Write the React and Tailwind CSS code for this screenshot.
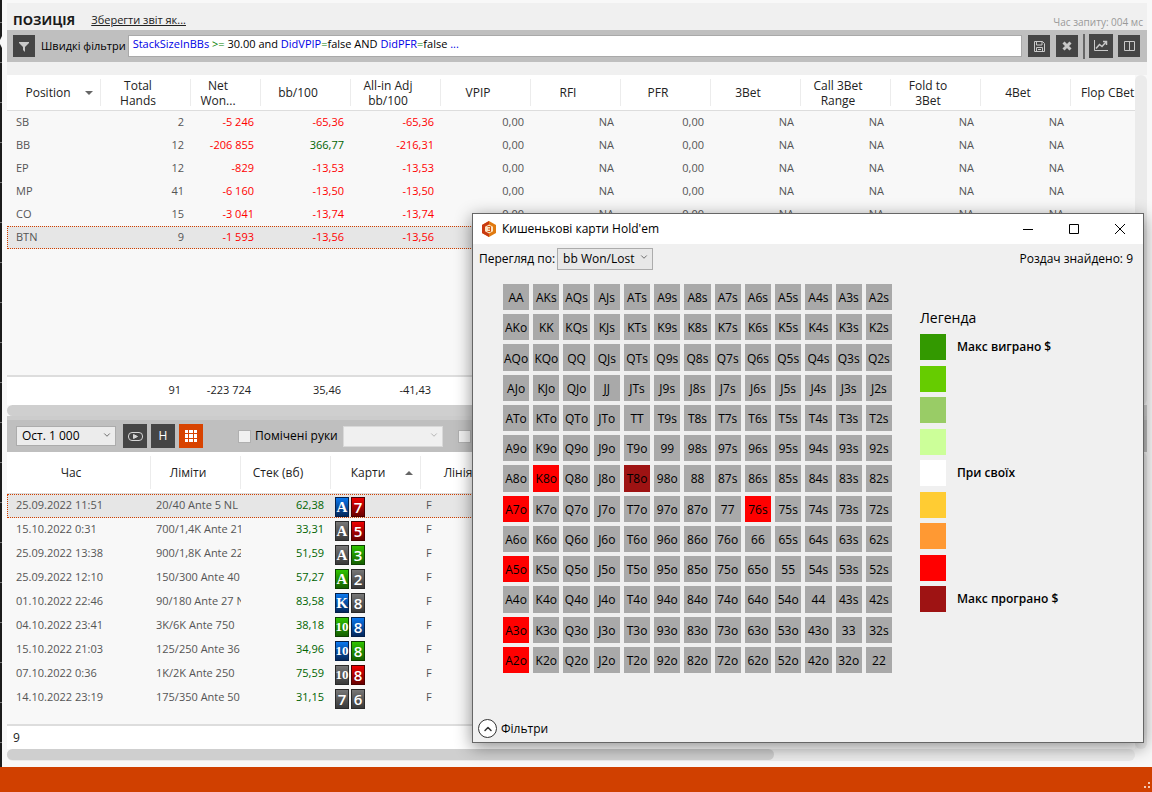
// src/App.jsx
import { useState } from "react";
import { ChevronDown, ChevronUp } from "lucide-react";

const columns = [
  { label: "Position", width: "w-[94px]", sort: "down" },
  { label: "Total Hands", width: "w-[90px]" },
  { label: "Net Won...", width: "w-[70px]" },
  { label: "bb/100", width: "w-[90px]" },
  { label: "All-in Adj bb/100", width: "w-[90px]" },
  { label: "VPIP", width: "w-[90px]" },
  { label: "RFI", width: "w-[90px]" },
  { label: "PFR", width: "w-[90px]" },
  { label: "3Bet", width: "w-[90px]" },
  { label: "Call 3Bet Range", width: "w-[90px]" },
  { label: "Fold to 3Bet", width: "w-[90px]" },
  { label: "4Bet", width: "w-[90px]" },
  { label: "Flop CBet", width: "" },
];

const tail = ["0,00", "NA", "0,00", "NA", "NA", "NA", "NA", ""];

const positions = [
  ["SB", "2", "-5 246", "-65,36", "-65,36", ...tail],
  ["BB", "12", "-206 855", "366,77", "-216,31", ...tail],
  ["EP", "12", "-829", "-13,53", "-13,53", ...tail],
  ["MP", "41", "-6 160", "-13,50", "-13,50", ...tail],
  ["CO", "15", "-3 041", "-13,74", "-13,74", ...tail],
  ["BTN", "9", "-1 593", "-13,56", "-13,56", ...tail],
];

const handColumns = [
  { label: "Час", width: "w-[144px]" },
  { label: "Ліміти", width: "w-[90px]" },
  { label: "Стек (вб)", width: "w-[90px]" },
  { label: "Карти", width: "w-[90px]", sort: "up" },
  { label: "Лінія", width: "w-[90px]" },
  { label: "", width: "" },
];

// suits: b = diamonds, r = hearts, k = spades, g = clubs
const hands = [
  ["25.09.2022 11:51", "20/40 Ante 5 NL", "62,38", "Ab 7r"],
  ["15.10.2022 0:31", "700/1,4K Ante 210", "33,31", "Ak 5r"],
  ["25.09.2022 13:38", "900/1,8K Ante 225", "51,59", "Ak 3g"],
  ["25.09.2022 12:10", "150/300 Ante 40", "57,27", "Ag 2k"],
  ["01.10.2022 22:46", "90/180 Ante 27 NL", "83,58", "Kb 8k"],
  ["04.10.2022 23:41", "3K/6K Ante 750", "38,18", "10g 8b"],
  ["15.10.2022 21:03", "125/250 Ante 36", "34,96", "10b 8g"],
  ["07.10.2022 0:36", "1K/2K Ante 250", "75,59", "10k 8r"],
  ["14.10.2022 23:19", "175/350 Ante 50", "31,15", "7k 6k"],
];

const suitClass = {
  b: "from-[#0a78f0] to-[#04285c] border-[#04204a]",
  r: "from-[#f00000] to-[#6a0000] border-[#4a0000]",
  k: "from-[#777777] to-[#3a3a3a] border-[#2a2a2a]",
  g: "from-[#2fc400] to-[#156000] border-[#0c4000]",
};

const ranks = "AKQJT98765432".split("");

const heat = {
  K8o: "bg-[#ff0000]",
  T8o: "bg-[#9e1313]",
  A7o: "bg-[#ff0000]",
  "76s": "bg-[#ff0000]",
  A5o: "bg-[#ff0000]",
  A3o: "bg-[#ff0000]",
  A2o: "bg-[#ff0000]",
};

const legend = [
  { color: "bg-[#339900]", label: "Макс виграно $" },
  { color: "bg-[#66cc00]" },
  { color: "bg-[#99cc66]" },
  { color: "bg-[#ccff99]" },
  { color: "bg-white", label: "При своїх" },
  { color: "bg-[#ffcc33]" },
  { color: "bg-[#ff9933]" },
  { color: "bg-[#ff0000]" },
  { color: "bg-[#9e1313]", label: "Макс програно $" },
];

function comboName(row, col) {
  if (row === col) return ranks[row] + ranks[row];
  return row < col ? `${ranks[row]}${ranks[col]}s` : `${ranks[col]}${ranks[row]}o`;
}

function valueColor(value, index) {
  if (index < 2) return "text-[#555555]";
  if (value.startsWith("-")) return "text-[#ff0000]";
  if (index === 3) return "text-[#006400]";
  return "text-[#555555]";
}

function IconButton({ label, className = "size-[22px]", children }) {
  return (
    <button
      type="button"
      aria-label={label}
      className={`grid shrink-0 place-items-center bg-[#454545] text-[#d6d6d6] ${className}`}
    >
      {children}
    </button>
  );
}

function HeaderCell({ column, height, last }) {
  return (
    <th className={`relative border-b border-[#dddddd] p-0 font-normal ${column.width}`}>
      <div className={`flex items-center py-1 ${height}`}>
        <span
          className={`flex-1 ${
            last ? "pl-2.5 text-left whitespace-nowrap" : column.sort === "down" ? "pl-1 text-center" : "px-2 text-center"
          }`}
        >
          {column.label}
        </span>
        {last ? null : (
          <span className="flex w-4 self-stretch items-center border-r border-[#ececec]">
            {column.sort ? (
              <svg viewBox="0 0 8 4" className="h-1 w-2 shrink-0" fill="#666666">
                <path d={column.sort === "down" ? "M0 0h8L4 4z" : "M0 4h8L4 0z"} />
              </svg>
            ) : null}
          </span>
        )}
      </div>
    </th>
  );
}

function Card({ code }) {
  const rank = code.slice(0, -1);
  const font =
    rank === "10"
      ? "font-['Liberation_Serif'] text-[13px] font-bold"
      : /\d/.test(rank)
        ? "font-['Open_Sans'] text-[15px] font-semibold"
        : "font-['Liberation_Serif'] text-[15px] font-bold";
  return (
    <span
      className={`flex h-5 w-3.5 items-center justify-center border bg-linear-to-b leading-5 text-white ${font} ${suitClass[code.slice(-1)]}`}
    >
      {rank}
    </span>
  );
}

function PositionReport() {
  const [filter, setFilter] = useState(
    "StackSizeInBBs >= 30.00 and DidVPIP=false AND DidPFR=false ..."
  );
  // keywords blue, operators green
  const tokens = filter.split(/(StackSizeInBBs|DidVPIP|DidPFR|>=|=|\.\.\.)/);

  return (
    <section className="flex flex-1 flex-col">
      <header className="flex h-[27px] items-center bg-[#f0f0f0] pt-1.5 pr-1 pl-1.5">
        <h1 className="text-[13px] leading-4 font-bold text-[#1a1a1a]">ПОЗИЦІЯ</h1>
        <a href="#save" className="ml-4 text-[11px] leading-4 text-[#222222] underline">
          Зберегти звіт як...
        </a>
        <span className="ml-auto pt-1 text-[10px] leading-4 text-[#999999]">Час запиту: 004 мс</span>
      </header>

      <div className="flex h-8 items-center bg-[#bfbfbf] pr-[7px] pl-1.5">
        <IconButton label="Фільтр">
          <svg viewBox="0 0 22 22" className="size-[22px]" fill="#c9c9c9">
            <path d="M6 7h10v1l-4 4v5l-2-2v-3L6 8z" />
          </svg>
        </IconButton>
        <label htmlFor="quick-filter" className="ml-1.5 text-[11px] whitespace-nowrap text-black">
          Швидкі фільтри
        </label>
        <div className="relative ml-0.5 h-[22px] flex-1 border border-[#a9a9a9] bg-white text-[11px]">
          <div
            aria-hidden="true"
            className="pointer-events-none absolute inset-0 overflow-hidden px-1 leading-4 whitespace-pre text-black"
          >
            {tokens.map((token, i) => {
              const color = /^(>=|=)$/.test(token)
                ? "text-[#008000]"
                : i % 2
                  ? "text-[#0000e6]"
                  : "text-black";
              return (
                <span key={i} className={color}>
                  {token}
                </span>
              );
            })}
          </div>
          <input
            id="quick-filter"
            value={filter}
            onChange={(e) => setFilter(e.target.value)}
            className="block h-4 w-full bg-transparent px-1 leading-4 text-transparent caret-black outline-none"
          />
        </div>
        <div className="ml-1.5 flex items-center">
          <IconButton label="Зберегти">
            <svg viewBox="0 0 22 22" className="size-[22px]" fill="none" stroke="#c9c9c9">
              <path d="M6.5 6.5h8l2 2v8h-10zM8.5 6.5v3.500h5.500v-3.500M8.500 16.500v-4h6v4M10 14.500h3" />
            </svg>
          </IconButton>
          <IconButton label="Очистити" className="ml-1.5 size-[22px]">
            <svg viewBox="0 0 22 22" className="size-[22px]" stroke="#c9c9c9" strokeWidth="3">
              <path d="M7.500 7.500l7 7M14.500 7.500l-7 7" />
            </svg>
          </IconButton>
          <span className="mr-1 ml-[5px] h-[25px] w-0.5 bg-[#666666]" />
          <IconButton label="Графік" className="size-6">
            <svg viewBox="0 0 24 24" className="size-6" fill="none" stroke="#c9c9c9">
              <path d="M5.500 6v10.500H19" />
              <path d="M7 14.500l3.500-4 2.500 2 4-4.500" strokeWidth="1.500" />
              <path d="M14 7.500h3.500V11" strokeWidth="1.500" />
            </svg>
          </IconButton>
          <IconButton label="Колонки" className="ml-[5px] size-[22px]">
            <svg viewBox="0 0 22 22" className="size-[22px]" fill="none" stroke="#c9c9c9">
              <path d="M6.500 6.500h10v9h-10zM11.500 6.500v9" />
            </svg>
          </IconButton>
        </div>
      </div>

      <div className="h-[13px] bg-[#f0f0f0]" />

      <div className="flex flex-1">
        <div className="flex min-w-0 flex-1 flex-col overflow-hidden">
          <table className="w-full table-fixed border-separate border-spacing-0">
            <thead className="bg-white leading-[15px] text-[#222222]">
              <tr>
                {columns.map((column, i) => (
                  <HeaderCell
                    key={column.label}
                    column={column}
                    height="h-[35px]"
                    last={i === columns.length - 1}
                  />
                ))}
              </tr>
            </thead>
            <tbody className="text-[11px]">
              {positions.map((row) => (
                <tr
                  key={row[0]}
                  className={
                    row[0] === "BTN"
                      ? "bg-[#e6e6e6] outline-1 -outline-offset-1 outline-[#d04000] outline-dotted"
                      : ""
                  }
                >
                  {row.map((value, i) => (
                    <td
                      key={i}
                      className={`h-[23px] p-0 pb-0.5 leading-4 whitespace-nowrap ${
                        i === 0 ? "pl-[9px]" : "pr-[7px] text-right"
                      } ${valueColor(value, i)}`}
                    >
                      {value}
                    </td>
                  ))}
                </tr>
              ))}
            </tbody>
          </table>
          <div className="mt-auto border-t-2 border-[#dddddd] bg-white">
            <table className="w-full table-fixed text-right text-[11px] text-[#222222]">
              <tbody>
                <tr>
                  <td className="w-[94px]" />
                  <td className="h-7 w-[90px] pr-2.5 pb-0.5">91</td>
                  <td className="w-[70px] pr-2.5 pb-0.5 whitespace-nowrap">-223 724</td>
                  <td className="w-[90px] pr-2.5 pb-0.5">35,46</td>
                  <td className="w-[90px] pr-2.5 pb-0.5">-41,43</td>
                  <td />
                </tr>
              </tbody>
            </table>
          </div>
        </div>
        <div className="w-3 rounded-md bg-[#ebebeb]" />
      </div>
      <div className="h-[11px] rounded-l-md bg-[#cfcfcf]" />
    </section>
  );
}

function HandList() {
  return (
    <section>
      <div className="flex h-9 items-center border-t-4 border-[#cccccc] bg-[#bfbfbf] pl-[9px] text-black">
        <div className="relative">
          <select
            aria-label="Кількість рук"
            className="block h-5 w-[100px] appearance-none border border-[#acacac] bg-[#ececec] px-[5px] leading-4"
          >
            <option>Ост. 1 000</option>
          </select>
          <ChevronDown className="pointer-events-none absolute top-1 right-1 size-2.5 text-[#555555]" />
        </div>
        <IconButton label="Відтворити" className="ml-[7px] size-6">
          <svg viewBox="0 0 24 24" className="size-6" fill="none" stroke="#d6d6d6">
            <rect x="5.500" y="8.500" width="14" height="8" rx="3.500" />
            <path d="M10.500 10.500v4l4-2z" fill="#d6d6d6" />
          </svg>
        </IconButton>
        <button type="button" className="ml-1 size-6 bg-[#454545] leading-6 text-white">
          H
        </button>
        <IconButton label="Сітка карт" className="ml-1 size-6 bg-[#d84300]!">
          <svg viewBox="0 0 24 24" className="size-6" fill="#ffffff">
            <path d="M6 6h3v3H6zM10 6h4v3h-4zM15 6h3v3h-3zM6 10h3v4H6zM10 10h4v4h-4zM15 10h3v4h-3zM6 15h3v3H6zM10 15h4v3h-4zM15 15h3v3h-3z" />
          </svg>
        </IconButton>
        <label className="ml-[35px] flex items-center gap-1 whitespace-nowrap">
          <input type="checkbox" className="size-[13px] appearance-none border border-[#b0b0b0] bg-[#f0f0f0]" />
          Помічені руки
        </label>
        <div className="relative ml-[5px]">
          <select
            aria-label="Тип позначки"
            disabled
            className="block h-[21px] w-[100px] appearance-none border border-[#d9d9d9] bg-[#f0f0f0]"
          />
          <ChevronDown className="pointer-events-none absolute top-1 right-1 size-2.5 text-[#aaaaaa]" />
        </div>
        <input
          type="checkbox"
          aria-label="Фільтр рук"
          className="ml-[15px] size-[13px] appearance-none border border-[#b0b0b0] bg-[#f0f0f0]"
        />
      </div>

      <div className="flex">
        <div className="min-w-0 flex-1">
          <table className="w-full table-fixed border-separate border-spacing-0">
            <thead className="bg-white text-[#222222]">
              <tr>
                {handColumns.map((column) => (
                  <HeaderCell key={column.label} column={column} height="h-[41px]" />
                ))}
              </tr>
            </thead>
            <tbody className="text-[11px] text-[#555555]">
              {hands.map(([time, limits, stack, cards], i) => (
                <tr
                  key={time}
                  className={
                    i === 0
                      ? "bg-[#e6e6e6] outline-1 -outline-offset-1 outline-[#d04000] outline-dotted"
                      : ""
                  }
                >
                  <td className="h-6 p-0 pb-0.5 pl-[9px] whitespace-nowrap">{time}</td>
                  <td className="p-0 pb-0.5 pl-[5px]">
                    <div className="overflow-hidden whitespace-nowrap">{limits}</div>
                  </td>
                  <td className="p-0 pr-[7px] pb-0.5 text-right text-[#006400]">{stack}</td>
                  <td className="p-0 pt-0.5 pl-1">
                    <div className="flex h-5 gap-0.5">
                      {cards.split(" ").map((code) => (
                        <Card key={code} code={code} />
                      ))}
                    </div>
                  </td>
                  <td className="p-0 pb-0.5 pl-[5px]">F</td>
                  <td />
                </tr>
              ))}
            </tbody>
          </table>
          <div className="mt-3.5 border-t-2 border-[#dddddd] bg-white px-1.5 leading-[23px] text-[#222222]">
            9
          </div>
        </div>
        <div className="w-3 rounded-md bg-[#ebebeb]" />
      </div>
      <div className="mr-3 mb-1.5 h-3 rounded-md bg-[#ebebeb]">
        <div className="h-[11px] w-[68%] rounded-md bg-[#cfcfcf]" />
      </div>
    </section>
  );
}

function PocketCardsDialog() {
  return (
    <div
      role="dialog"
      aria-labelledby="pocket-title"
      className="absolute right-2 bottom-[49px] flex h-[530px] w-[672px] flex-col border border-[#666666] bg-[#f0f0f0] text-black shadow-[0_4px_16px_rgba(0,0,0,0.45)]"
    >
      <div className="flex h-[30px] shrink-0 items-center bg-white pl-2">
        <svg viewBox="0 0 16 16" className="size-4">
          <path d="M8 0l7 4v8l-7 4-7-4V4z" fill="#e07a10" />
          <path d="M1 4l7-4v4L4.500 6v4L8 12v4l-7-4z" fill="#c93a10" />
          <path d="M8 3.500l4 2.200v4.600l-4 2.200-4-2.200V5.700z" fill="#fbe3c0" />
          <path d="M6.500 5.500h3v5h-3M7 8h2.500" stroke="#d8540c" fill="none" />
        </svg>
        <h2 id="pocket-title" className="ml-[5px] flex-1 leading-4">
          Кишенькові карти Hold'em
        </h2>
        <button type="button" aria-label="Згорнути" className="grid h-[30px] w-[46px] place-items-center">
          <svg viewBox="0 0 10 10" className="size-2.5" stroke="black">
            <path d="M0 5.500h10" />
          </svg>
        </button>
        <button type="button" aria-label="Розгорнути" className="grid h-[30px] w-[46px] place-items-center">
          <svg viewBox="0 0 10 10" className="size-2.5" fill="none" stroke="black">
            <path d="M.5.5h9v9h-9z" />
          </svg>
        </button>
        <button type="button" aria-label="Закрити" className="grid h-[30px] w-[46px] place-items-center">
          <svg viewBox="0 0 10 10" className="size-2.5" stroke="black">
            <path d="M0 0l10 10M10 0L0 10" />
          </svg>
        </button>
      </div>

      <div className="flex items-center pt-1 pr-2.5 pl-1.5">
        <label htmlFor="view-by">Перегляд по:</label>
        <div className="relative ml-0.5">
          <select
            id="view-by"
            className="block h-[22px] w-24 appearance-none border border-[#acacac] bg-[#e8e8e8] px-[5px] leading-4"
          >
            <option>bb Won/Lost</option>
          </select>
          <ChevronDown className="pointer-events-none absolute top-1 right-1 size-2.5 text-[#555555]" />
        </div>
        <span className="ml-auto">Роздач знайдено: 9</span>
      </div>

      <div className="flex items-start pt-3.5 pl-[30px]">
        <div className="grid h-[389px] w-[389px] grid-cols-13 grid-rows-13 gap-1">
          {ranks.map((_, row) =>
            ranks.map((_, col) => {
              const name = comboName(row, col);
              return (
                <div
                  key={name}
                  className={`flex items-center justify-center pt-0.5 ${heat[name] || "bg-[#a9a9a9]"}`}
                >
                  {name}
                </div>
              );
            })
          )}
        </div>
        <div className="pt-6 pl-7">
          <h3 className="text-sm leading-5">Легенда</h3>
          <ul className="mt-1.5 flex h-[278px] flex-col justify-between">
            {legend.map((item) => (
              <li key={item.color} className="flex items-center gap-[11px] font-semibold">
                <span className={`size-[26px] ${item.color}`} />
                {item.label}
              </li>
            ))}
          </ul>
        </div>
      </div>

      <button type="button" className="mt-auto mb-1 flex items-center gap-1 self-start pl-[5px]">
        <span className="grid size-[19px] place-items-center rounded-full border border-[#333333] bg-white">
          <ChevronUp className="size-3 text-[#333333]" strokeWidth={3} />
        </span>
        Фільтри
      </button>
    </div>
  );
}

export default function App() {
  return (
    <div className="relative flex min-h-screen flex-col overflow-hidden bg-[#f8f8f8] font-['Open_Sans','Noto_Sans',sans-serif] text-[12px] leading-4">
      <div className="flex flex-1">
        <div className="w-0.5 bg-[repeating-linear-gradient(#1c1c1c_0_22px,#777777_22px_23px,#1c1c1c_23px_40px)] pt-9">
          <svg viewBox="0 0 2 12" className="h-3 w-0.5" fill="#f8f8f8">
            <path d="M2 0v12L0 8V4z" />
          </svg>
        </div>
        <main className="flex min-w-0 flex-1 flex-col pt-[3px] pr-[5px] pl-[5px]">
          <PositionReport />
          <HandList />
        </main>
      </div>
      <footer className="flex h-[25px] items-end justify-end bg-[#d04000]">
        <svg viewBox="0 0 8 8" className="mb-0.5 size-2" fill="#f3c9b3">
          <path d="M4 0h2v2H4zM0 4h2v2H0zM4 4h2v2H4z" />
        </svg>
      </footer>
      <PocketCardsDialog />
    </div>
  );
}
